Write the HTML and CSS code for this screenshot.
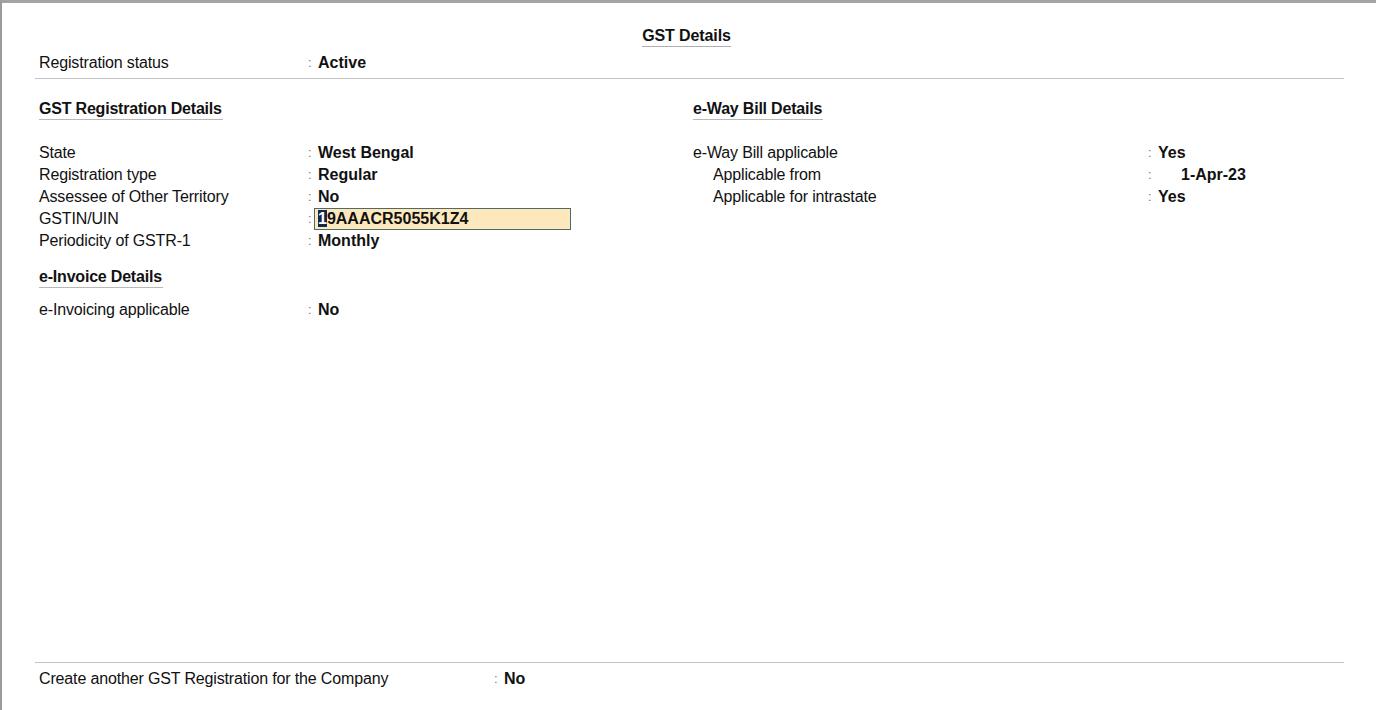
FILE: index.html
```html
<!DOCTYPE html>
<html lang="en">
<head>
  <meta charset="UTF-8">
  <title>GST Details</title>
  <link rel="stylesheet" href="styles.css">
</head>
<body>
  <div class="frame">
    <div class="title-row"><span class="title">GST Details</span></div>

    <div class="row">
      <span class="lbl">Registration status</span>
      <span class="colon">:</span>
      <span class="val">Active</span>
    </div>
    <div class="rule"></div>

    <div class="cols">
      <div class="col">
        <div class="head"><span>GST Registration Details</span></div>
        <div class="rows">
          <div class="row"><span class="lbl">State</span><span class="colon">:</span><span class="val">West Bengal</span></div>
          <div class="row"><span class="lbl">Registration type</span><span class="colon">:</span><span class="val">Regular</span></div>
          <div class="row"><span class="lbl">Assessee of Other Territory</span><span class="colon">:</span><span class="val">No</span></div>
          <div class="row"><span class="lbl">GSTIN/UIN</span><span class="colon">:</span><span class="field"><span class="cursor">1</span>9AAACR5055K1Z4</span></div>
          <div class="row"><span class="lbl">Periodicity of GSTR-1</span><span class="colon">:</span><span class="val">Monthly</span></div>
        </div>
        <div class="head head-sub"><span>e-Invoice Details</span></div>
        <div class="row"><span class="lbl">e-Invoicing applicable</span><span class="colon">:</span><span class="val">No</span></div>
      </div>

      <div class="col col-right">
        <div class="head"><span>e-Way Bill Details</span></div>
        <div class="rows">
          <div class="row"><span class="lbl">e-Way Bill applicable</span><span class="colon">:</span><span class="val">Yes</span></div>
          <div class="row"><span class="lbl indent">Applicable from</span><span class="colon">:</span><span class="val date">1-Apr-23</span></div>
          <div class="row"><span class="lbl indent">Applicable for intrastate</span><span class="colon">:</span><span class="val">Yes</span></div>
        </div>
      </div>
    </div>

    <div class="footer">
      <div class="rule"></div>
      <div class="row foot-row">
        <span class="lbl">Create another GST Registration for the Company</span>
        <span class="colon">:</span>
        <span class="val">No</span>
      </div>
    </div>
  </div>
</body>
</html>
```

FILE: styles.css
```css
html, body {
  margin: 0;
  height: 100%;
  background: #fff;
}
body {
  font-family: Arial, 'Liberation Sans', sans-serif;
  font-size: 16px;
  color: #111;
  overflow: hidden;
}
.frame {
  box-sizing: border-box;
  height: 710px;
  border-top: 3px solid #a3a3a3;
  border-left: 2px solid #9a9a9a;
  padding: 0 32px 0 33px;
  display: flex;
  flex-direction: column;
}
.title-row {
  text-align: center;
  padding: 23px 6px 0 0;
  height: 26px;
}
.title {
  display: inline-block;
  font-weight: bold;
  line-height: 20px;
  border-bottom: 1px solid #b0b0b0;
  letter-spacing: -0.1px;
}
.row {
  display: flex;
  align-items: center;
  height: 22px;
  line-height: 22px;
  white-space: nowrap;
}
.lbl {
  width: 269px;
  padding-left: 4px;
  letter-spacing: -0.15px;
}
.colon {
  width: 10px;
  color: #777;
  font-size: 13px;
}
.val {
  font-weight: bold;
}
.rule {
  border-top: 1px solid #c4c4c4;
  margin-top: 4px;
}
.cols {
  display: flex;
}
.col {
  width: 654px;
}
.col-right .lbl {
  width: 455px;
}
.col-right .lbl.indent {
  width: 435px;
  padding-left: 24px;
}
.date {
  padding-left: 23px;
}
.head {
  padding: 20px 0 0 4px;
  height: 22px;
  margin-bottom: 21px;
}
.head span {
  display: inline-block;
  font-weight: bold;
  line-height: 20px;
  border-bottom: 1px solid #b8b8b8;
  letter-spacing: -0.2px;
  padding-right: 1px;
}
.head-sub {
  padding-top: 15px;
  margin-bottom: 10px;
}
.field {
  box-sizing: border-box;
  margin-left: -4px;
  width: 257px;
  height: 22px;
  line-height: 20px;
  padding-left: 3px;
  border: 1px solid #4d6b6b;
  background: #fde8bd;
  font-weight: bold;
}
.cursor {
  background: #14264a;
  color: #fff;
}
.footer {
  margin-top: auto;
  padding-bottom: 20px;
}
.foot-row {
  margin-top: 5px;
}
.foot-row .lbl {
  width: 455px;
}
```
